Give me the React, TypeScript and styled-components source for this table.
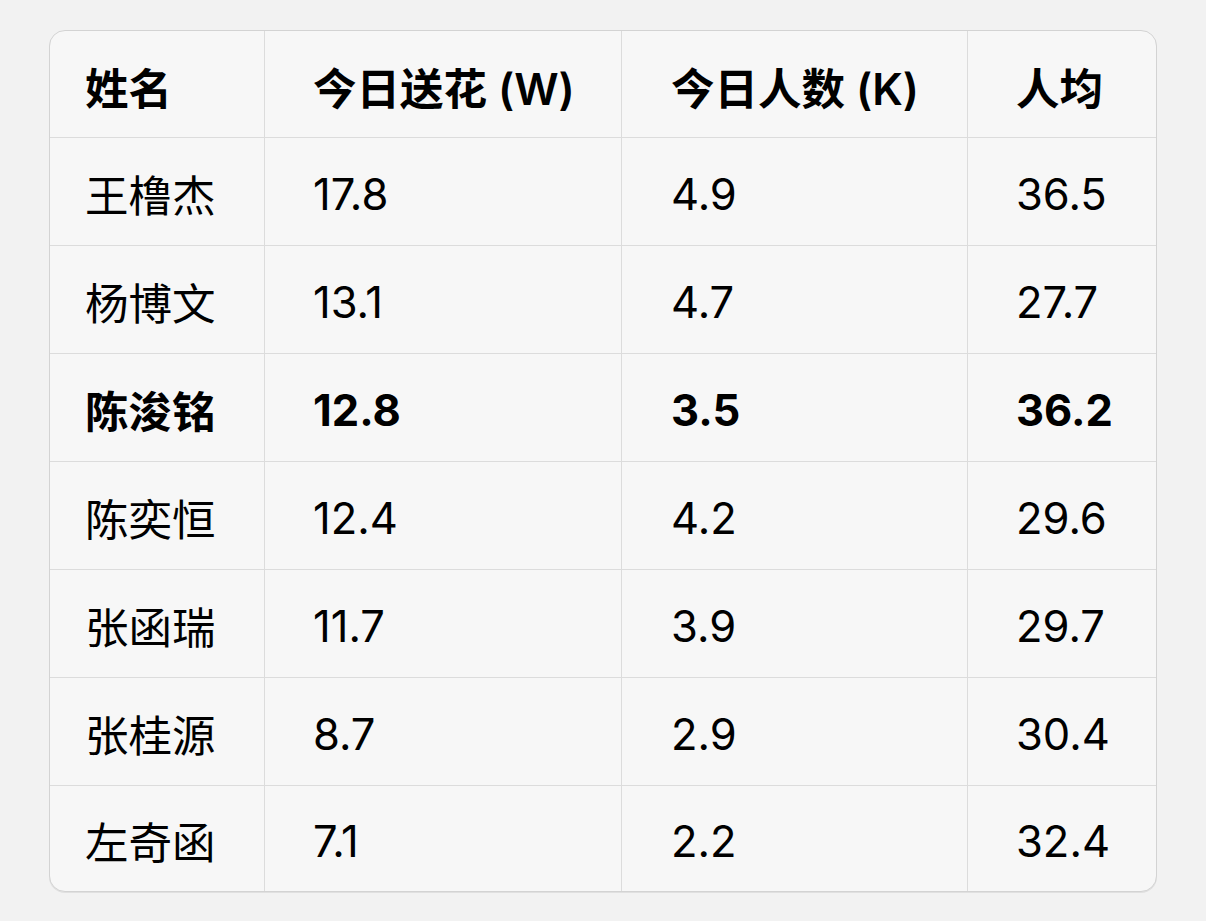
import React from "react";
import styled, { createGlobalStyle } from "styled-components";

const Global = createGlobalStyle`
  html, body { margin: 0; padding: 0; background: #f2f2f2; }
  body { font-family: "Inter", "Noto Sans CJK SC", sans-serif; color: #000; }
`;

const Page = styled.div`
  padding: 30px 0 0 49px;
  width: 1206px;
  height: 921px;
  box-sizing: border-box;
`;

const Table = styled.div`
  width: 1108px;
  box-sizing: border-box;
  background: #f7f7f7;
  border: 1px solid #d3d3d3;
  border-radius: 16px;
  box-shadow: 0 1px 0 #e0e0e0;
  overflow: hidden;
  display: grid;
  grid-template-columns: 215px 357px 346px 188px;
`;

const Cell = styled.div<{ $pad: number; $weight?: number; $head?: boolean; $last?: boolean; $lastRow?: boolean }>`
  box-sizing: border-box;
  height: ${(p) => (p.$head ? 107 : p.$lastRow ? 105 : 108)}px;
  display: flex;
  align-items: center;
  padding-left: ${(p) => p.$pad}px;
  padding-top: 4px;
  font-size: 43.5px;
  font-weight: ${(p) => p.$weight ?? 400};
  border-right: ${(p) => (p.$last ? "none" : "1px solid #dcdcdc")};
  border-bottom: ${(p) => (p.$lastRow ? "none" : "1px solid #dcdcdc")};
  white-space: nowrap;
`;

const pads = [35, 48, 49, 48];

const header = ["姓名", "今日送花 (W)", "今日人数 (K)", "人均"];
const rows: { cells: string[]; bold?: boolean }[] = [
  { cells: ["王橹杰", "17.8", "4.9", "36.5"] },
  { cells: ["杨博文", "13.1", "4.7", "27.7"] },
  { cells: ["陈浚铭", "12.8", "3.5", "36.2"], bold: true },
  { cells: ["陈奕恒", "12.4", "4.2", "29.6"] },
  { cells: ["张函瑞", "11.7", "3.9", "29.7"] },
  { cells: ["张桂源", "8.7", "2.9", "30.4"] },
  { cells: ["左奇函", "7.1", "2.2", "32.4"] },
];

export default function App() {
  return (
    <Page>
      <Global />
      <Table>
        {header.map((h, i) => (
          <Cell key={"h" + i} $pad={pads[i]} $head $weight={600} $last={i === 3}>
            {h}
          </Cell>
        ))}
        {rows.map((r, ri) =>
          r.cells.map((c, i) => (
            <Cell
              key={ri + "-" + i}
              $pad={pads[i]}
              $weight={r.bold ? 700 : 400}
              $last={i === 3}
              $lastRow={ri === rows.length - 1}
            >
              {c}
            </Cell>
          ))
        )}
      </Table>
    </Page>
  );
}
